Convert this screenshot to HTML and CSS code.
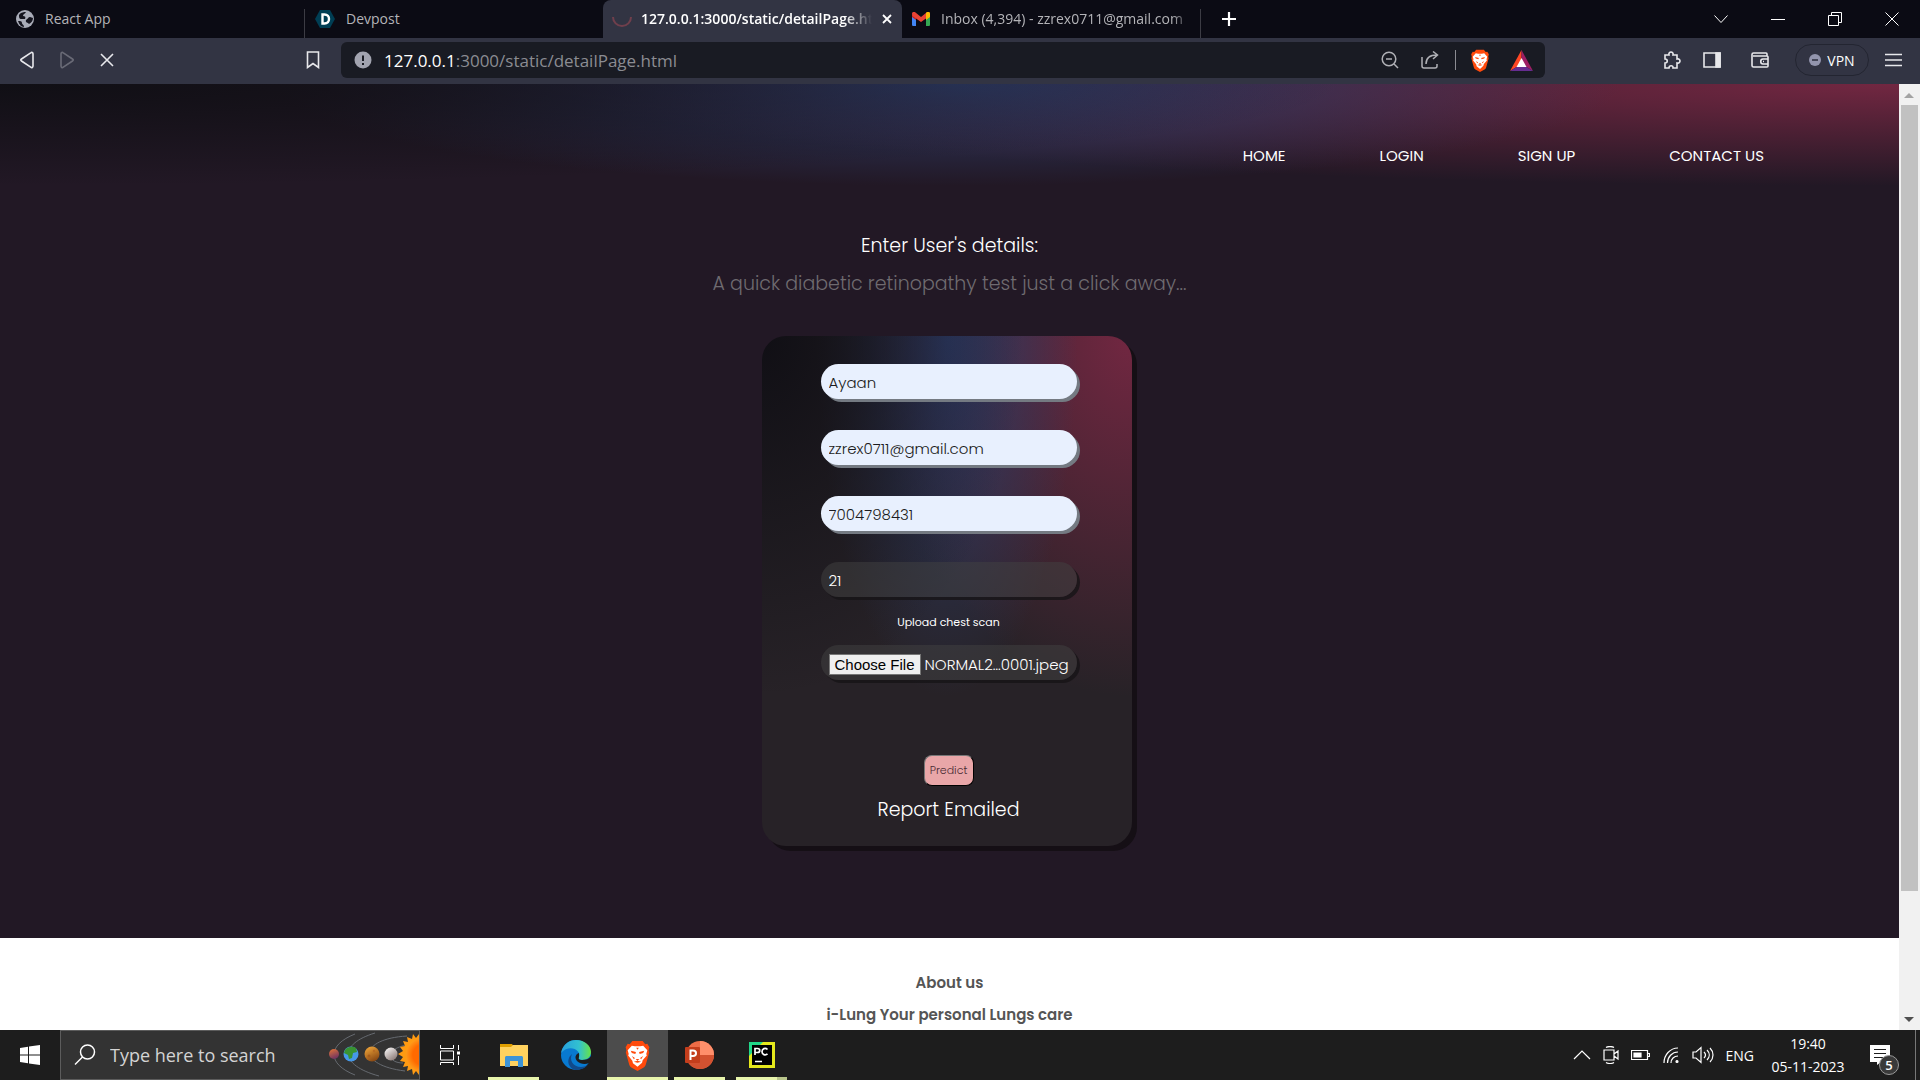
FILE: index.html
```html
<!DOCTYPE html>
<html lang="en">
<head>
    <meta charset="UTF-8">
    <meta name="viewport" content="width=device-width, initial-scale=1.0">
    <title>i-Lung</title>
    <link rel="stylesheet" href="styles.css">
</head>
<body>
    <!-- shared icons -->
    <svg class="defs" aria-hidden="true">
        <symbol id="brave" viewBox="0 0 24 30">
            <path d="M7 1h10l2.500 3 2-.3L23.500 7l-.8 3 .6 2-3.300 12c-.4 1.200-1 2-2 2.700L12 30l-6-3.300c-1-.7-1.600-1.500-2-2.700L.7 12l.6-2-.8-3 2-3.300 2 .3z" fill="#ff4a0c"/>
            <path d="M6.500 5.500l3 .6h5l3-.6 4 4.500-1 3.500.5 1.500-4 4.500-.6 2.500L12 26l-4.400-3.500-.6-2.500L3 15l.5-1.500-1-3.500z" fill="#fff"/>
            <path d="M5.500 10.500l5 1.200-.6 1.800-3.400-1zM18.500 10.500l-5 1.200.6 1.800 3.400-1zM6.500 15.500l3 2-1 1.200zM17.500 15.500l-3 2 1 1.200zM10.300 18.500h3.400L12 20.300zM8.500 21l3.500-1 3.500 1-3.500 1zM10.700 7.500h2.600L12 9.500z" fill="#ff4a0c"/>
        </symbol>
    </svg>

    <header class="tabs">
        <div class="tab">
            <svg width="18" height="18" viewBox="0 0 18 18"><circle cx="9" cy="9" r="9" fill="#a9acb8"/><path d="M3 5c2-3 5-3 7-3-1 2-3 2-3 4 2 0 3 1 2 3H5c-2 0-2-2-2-4zM10 10c2-1 2-3 4-3l3 1c0 3-2 5-4 6-1-2-4-1-3-4zM2 11c2 0 4 0 4 2s2 1 2 4c-3 0-5-3-6-6z" fill="#14141e"/></svg>
            <span class="tab-name">React App</span>
        </div>
        <div class="tab tab-line">
            <svg width="20" height="18" viewBox="0 0 20 18"><path d="M5 0h10l5 9-5 9H5L0 9z" fill="#003e54"/><path d="M7.500 4.500h2c6 0 6 9 0 9h-2z" fill="none" stroke="#fff" stroke-width="2.400"/></svg>
            <span class="tab-name">Devpost</span>
        </div>
        <div class="tab tab-active">
            <svg width="22" height="20" viewBox="0 0 22 20"><path d="M2 8a9 9 0 0 0 18 0" fill="none" stroke="#703f4c" stroke-width="2"/></svg>
            <span class="tab-name">127.0.0.1:3000/static/detailPage.html</span>
            <button class="tab-close" aria-label="Close tab"><svg width="10" height="10" viewBox="0 0 10 10"><path d="M1 1l8 8M9 1L1 9" stroke="#fff" stroke-width="1.800"/></svg></button>
        </div>
        <div class="tab tab-mail">
            <svg width="18" height="14" viewBox="0 0 18 14"><path d="M0 3v9.500c0 1 .5 1.500 1.500 1.500H4V6z" fill="#4285f4"/><path d="M18 3v9.500c0 1-.5 1.500-1.500 1.500H14V6z" fill="#34a853"/><path d="M0 2l4 3.500V8L0 5z" fill="#c5221f"/><path d="M18 2l-4 3.500V8l4-3z" fill="#fbbc04"/><path d="M0 2C0 0 2-1 3.500.5L9 5l5.500-4.500C16-1 18 0 18 2l-.5 2L9 10 .5 4z" fill="#ea4335"/><path d="M14 1l.5-.5C16-1 18 0 18 2v2l-4 3z" fill="#fbbc04"/></svg>
            <span class="tab-name">Inbox (4,394) - zzrex0711@gmail.com</span>
        </div>
        <button class="new-tab" aria-label="New tab"><svg width="16" height="16" viewBox="0 0 16 16"><path d="M8 1v14M1 8h14" stroke="#fff" stroke-width="2.200"/></svg></button>
        <div class="window-buttons">
            <button aria-label="Search tabs"><svg width="14" height="14" viewBox="0 0 14 14"><path d="M.5 3.500L7 10.500l6.500-7"/></svg></button>
            <button aria-label="Minimize"><svg width="14" height="14" viewBox="0 0 14 14"><path d="M0 7.500h14"/></svg></button>
            <button aria-label="Restore"><svg width="14" height="14" viewBox="0 0 14 14"><path d="M.5 3.500h10v10H.500zM3.500 3V.5h10v10H11"/></svg></button>
            <button aria-label="Close"><svg width="14" height="14" viewBox="0 0 14 14"><path d="M.5.5l13 13M13.500.5l-13 13"/></svg></button>
        </div>
    </header>

    <div class="toolbar">
        <div class="nav-buttons">
            <button aria-label="Back"><svg width="16" height="18" viewBox="0 0 16 18"><path d="M14 3v12c0 1.500-1.200 2-2.300 1.200L2.500 10c-1-.7-1-1.300 0-2l9.200-6.200C12.800 1 14 1.500 14 3z"/></svg></button>
            <button class="dim" aria-label="Forward"><svg width="16" height="18" viewBox="0 0 16 18"><path d="M2 3v12c0 1.500 1.200 2 2.300 1.200L13.500 10c1-.7 1-1.300 0-2L4.300 1.800C3.200 1 2 1.500 2 3z"/></svg></button>
            <button aria-label="Stop"><svg width="14" height="14" viewBox="0 0 14 14"><path d="M1 1l12 12M13 1L1 13"/></svg></button>
        </div>
        <button class="bookmark" aria-label="Bookmark"><svg width="14" height="18" viewBox="0 0 14 18"><path d="M1.500 1h11v15.500L7 12.500l-5.500 4z"/></svg></button>
        <div class="address">
            <svg width="18" height="18" viewBox="0 0 18 18"><circle cx="9" cy="9" r="8.500" fill="#a2a4b0"/><path d="M9 4.500V10M9 12v2" stroke="#191b23" stroke-width="2"/></svg>
            <p class="url"><b>127.0.0.1</b>:3000/static/detailPage.html</p>
            <svg class="line" width="18" height="18" viewBox="0 0 18 18"><circle cx="8" cy="8" r="6.800"/><path d="M5 8h6M13 13l4 4"/></svg>
            <svg class="line share" width="18" height="18" viewBox="0 0 18 18"><path d="M1 6v9c0 1.500.5 2 2 2h11c1.500 0 2-.5 2-2v-2M5 13c0-6 4-9 11-9M12 .500L16.500 4 12 8"/></svg>
            <i class="divider"></i>
            <svg width="20" height="23"><use href="#brave"/></svg>
            <svg class="bat" width="23" height="21" viewBox="0 0 23 21"><path d="M11.500 0L0 21l11.500-7z" fill="#ff4724"/><path d="M11.500 0L23 21l-11.500-7z" fill="#9e1f63"/><path d="M0 21h23l-11.500-7z" fill="#662d91"/><path d="M11.500 8l-5 9h10z" fill="#fff"/></svg>
        </div>
        <div class="extensions">
            <button aria-label="Extensions"><svg width="18" height="18" viewBox="0 0 18 18"><path d="M2 4h4c-1-4 5-4 4 0h4v4c4-1 4 5 0 4v5h-4c.5-3-4-3-4 0H2v-5c3 0 3-4 0-4z"/></svg></button>
            <button aria-label="Side panel"><svg width="18" height="16" viewBox="0 0 18 16"><path d="M1 1h16v14H1z"/><path d="M13 1h4v14h-4z" fill="#e8e8ec"/></svg></button>
            <button class="wallet" aria-label="Wallet"><svg width="18" height="16" viewBox="0 0 18 16"><path d="M16 4V2c0-.6-.4-1-1-1H2.500C1.500 1 1 1.500 1 2.500v11c0 1 .5 1.500 1.500 1.500H16c.6 0 1-.4 1-1V5c0-.6-.4-1-1-1H2M17 7h-5c-3 0-3 5 0 5h5M12 9.500h1"/></svg></button>
            <button class="vpn"><svg width="12" height="14" viewBox="0 0 12 14"><circle cx="6" cy="7" r="6" fill="#9395ad" stroke="none"/><path d="M3 7h6" stroke="#323443"/></svg>VPN</button>
            <button aria-label="Menu"><svg width="17" height="14" viewBox="0 0 17 14"><path d="M0 1.500h17M0 7h17M0 12.500h17"/></svg></button>
        </div>
    </div>

    <div class="viewport">
        <div class="page">
            <div class="dark">
                <nav class="menu">
                    <a href="#">HOME</a>
                    <a href="#">LOGIN</a>
                    <a href="#">SIGN UP</a>
                    <a href="#">CONTACT US</a>
                </nav>
                <main class="container">
                    <h1>Enter User's details:</h1>
                    <p class="tagline">A quick diabetic retinopathy test just a click away...</p>
                    <form class="card">
                        <input class="field filled" type="text" aria-label="Name" value="Ayaan">
                        <input class="field filled" type="email" aria-label="Email" value="zzrex0711@gmail.com">
                        <input class="field filled" type="tel" aria-label="Phone" value="7004798431">
                        <input class="field" type="text" aria-label="Age" value="21">
                        <label for="scan">Upload chest scan</label>
                        <input class="field file" type="file" id="scan">
                        <button class="predict" type="button">Predict</button>
                        <p class="result">Report Emailed</p>
                    </form>
                </main>
            </div>
            <footer class="about">
                <h2>About us</h2>
                <h2>i-Lung Your personal Lungs care</h2>
            </footer>
        </div>
        <div class="scrollbar">
            <svg width="21" height="21" viewBox="0 0 21 21"><path d="M5 14l5-5 5 5z" fill="#a3a3a3"/></svg>
            <div class="track"><div class="thumb"></div></div>
            <svg width="21" height="21" viewBox="0 0 21 21"><path d="M5 8l5 5 5-5z" fill="#505050"/></svg>
        </div>
    </div>

    <div class="taskbar">
        <button class="start" aria-label="Start"><svg width="20" height="20" viewBox="0 0 20 20"><path d="M0 3l8-1.200V9.500H0zM9 1.600L20 0v9.500H9zM0 10.500h8v7.700L0 17zM9 10.500h11V20L9 18.400z" fill="#fff"/></svg></button>
        <div class="search">
            <svg width="22" height="22" viewBox="0 0 22 22"><circle cx="13.500" cy="8" r="7" fill="none" stroke="#fff" stroke-width="1.500"/><path d="M8.500 13L1 20.500" stroke="#fff" stroke-width="1.500"/></svg>
            <input type="text" aria-label="Search" placeholder="Type here to search">
            <svg class="planets" width="90" height="48" viewBox="0 0 90 48">
                <defs>
                    <radialGradient id="sun"><stop offset="0.600" stop-color="#ff6a00"/><stop offset="1" stop-color="#ff9a1a"/></radialGradient>
                    <linearGradient id="mars" x2="0.400" y2="1"><stop stop-color="#e57536"/><stop offset="1" stop-color="#743560"/></linearGradient>
                    <linearGradient id="venus" x2="0.500" y2="1"><stop stop-color="#f8ad3c"/><stop offset="1" stop-color="#8c4b14"/></linearGradient>
                    <linearGradient id="mercury" x2="0.700" y2="1"><stop stop-color="#fff"/><stop offset="1" stop-color="#8d7c78"/></linearGradient>
                </defs>
                <g fill="none" stroke="#666a70"><path d="M26 3C-2 14-2 33 26 44M46 2C10 13 10 34 50 45M78 5C30 8 28 34 76 40M88 13C55 14 56 32 74 32"/></g>
                <circle cx="5" cy="23" r="5" fill="url(#mars)"/>
                <circle cx="22" cy="23" r="7.500" fill="#4698e8"/><path d="M16 19c3-4 8-4 11-2l1 4-4 1-1 5-3 1-1-4-4-2z" fill="#399332"/>
                <circle cx="43" cy="23" r="7.500" fill="url(#venus)"/><circle cx="40" cy="25" r="1.500" fill="#a65c1a"/><circle cx="45" cy="20" r="1.200" fill="#b86b22"/>
                <circle cx="62" cy="23" r="6.500" fill="url(#mercury)"/>
                <path d="M90 3l-3 4-3-4-1 5-5-2 1 5-5-1 2 5-5 1 3 4-5 3 5 3-3 4 5 1-2 5 5-1-1 5 5-2 1 6 3-4 3 4z" fill="#ff9b12"/>
                <circle cx="94" cy="24" r="17" fill="url(#sun)"/>
            </svg>
        </div>
        <div class="apps">
            <button class="view" aria-label="Task view"><svg width="20" height="20" viewBox="0 0 20 20"><path d="M.5 0v3.500h13V0M.5 6h13v9H.500zM.5 20v-2.500h13V20M18.500 0v5M18.500 11v9" fill="none" stroke="#fff"/><path d="M17 6.500h3v3h-3z" fill="#fff"/></svg></button>
            <button class="open" aria-label="File Explorer"><svg width="28" height="24" viewBox="0 0 28 24"><path d="M0 1h12l2 3v5H0z" fill="#e09f00"/><path d="M0 4h11l2-2h15v21H0z" fill="#ffd25e"/><path d="M5 24V15c0-1.500.5-2 2-2h14c1.500 0 2 .5 2 2v9h-5v-6h-8v6z" fill="#3d94d6"/></svg></button>
            <button aria-label="Edge"><svg width="30" height="30" viewBox="0 0 30 30">
                <defs><linearGradient id="edgeTop"><stop stop-color="#279fdd"/><stop offset="0.600" stop-color="#32c1d0"/><stop offset="1" stop-color="#67e346"/></linearGradient></defs>
                <circle cx="15" cy="15" r="15" fill="#0879d0"/>
                <path d="M0 13C2 4 8 0 15 0c9 0 15 6 15 12 0 5-4 8-9 8-3 0-4-1-3-3 3-6-9-14-18-4z" fill="url(#edgeTop)"/>
                <path d="M11 14c-3 6 1 13 9 13 3 0 6-1 8-4-3 5-8 7-13 7C8 29 4 20 11 14z" fill="#114a8b"/>
                <path d="M18 17c-1 2 0 3 3 3 4 0 7-1 9-4v5l-2 2c-4 2-9 1-12-2-3-4-1-7 2-8z" fill="#1d1d1d"/></svg></button>
            <button class="open current" aria-label="Brave"><svg width="25" height="31"><use href="#brave"/></svg></button>
            <button class="open" aria-label="PowerPoint"><svg width="29" height="28" viewBox="0 0 29 28"><circle cx="15" cy="14" r="14" fill="#ed6c47"/><path d="M15 0a14 14 0 0 1 14 14H15z" fill="#ff8f6b"/><path d="M1 14h28a14 14 0 0 1-28 0z" fill="#d35230"/><rect y="6" width="15" height="16" rx="1" fill="#c43e1c"/><path d="M5.500 19V9.500h2.500c4 0 4 5.500 0 5.500H5.500" fill="none" stroke="#fff" stroke-width="2"/></svg></button>
            <button class="open several" aria-label="PyCharm"><svg width="26" height="26" viewBox="0 0 26 26"><path d="M0 0h26v26H0z" fill="#e5e81c"/><path d="M0 0h14L0 14z" fill="#21d789"/><path d="M3 3h20v20H3z" fill="#000"/><path d="M6 13V6.500h2.500c3 0 3 4 0 4H6M18.500 7.500c-2-2-5.500-1-5.500 2.200 0 3 3.500 4 5.500 2.200M6 19.500h7" fill="none" stroke="#fff" stroke-width="1.700"/></svg></button>
        </div>
        <div class="tray">
            <svg width="18" height="18" viewBox="0 0 18 18"><path d="M1 13l8-8 8 8"/></svg>
            <svg width="16" height="18" viewBox="0 0 16 18"><path d="M1 4h10v10H1zM11 8l4-3v8l-4-3M3 1.500c2-1.300 6-1.300 8 0M3 16.500c2 1.300 6 1.300 8 0"/></svg>
            <svg width="19" height="18" viewBox="0 0 19 18"><path d="M.5 4.500h16v9H.500zM17 7.500h1.500v3H17"/><path d="M3 7h7v4H3z" fill="#fff"/></svg>
            <svg width="18" height="18" viewBox="0 0 18 18"><path d="M2 17C2 9 8 2 16 2M5.500 17C5.500 11 10 6 16 6M9 17c0-4 3-7 7-7" /><circle cx="15" cy="15.500" r="1" fill="#fff"/></svg>
            <svg width="22" height="18" viewBox="0 0 22 18"><path d="M1 6h3l5-4.500v15L4 12H1zM12 6c2 2 2 4 0 6M15 4c3 3 3 7 0 10M18 2c4 4 4 10 0 14"/></svg>
            <span>ENG</span>
            <div class="clock"><span>19:40</span><span>05-11-2023</span></div>
            <button class="notes" aria-label="Notifications">
                <svg width="20" height="20" viewBox="0 0 20 20"><path d="M0 0h20v17h-9l-4 3v-3H0z" fill="#fff"/><path d="M4 4.500h12M4 8.500h12M4 12.500h12" stroke="#1d1d1d"/></svg>
                <span class="badge">5</span>
            </button>
        </div>
    </div>
    <script src="script.js"></script>
</body>
</html>
```
FILE: styles.css
```css
* {
    box-sizing: border-box;
}
body {
    margin: 0;
    height: 100vh;
    display: flex;
    flex-direction: column;
    overflow: hidden;
    font-family: "Open Sans", "Noto Sans", sans-serif;
    color: #fff;
}
button {
    display: flex;
    align-items: center;
    justify-content: center;
    padding: 0;
    border: none;
    background: none;
    color: inherit;
    font: inherit;
}
svg {
    flex: none;
}
.defs {
    display: none;
}

/* browser tabs */
.tabs {
    display: flex;
    flex: none;
    height: 38px;
    background: #0b0b14;
}
.tab {
    display: flex;
    align-items: center;
    flex: 0 1 299px;
    gap: 11px;
    min-width: 0;
    padding: 0 10px 1px;
    font-size: 14px;
    color: #b4b4b8;
}
.tab:first-child {
    flex-basis: 304px;
    padding-left: 16px;
}
.tab-line {
    border-left: 1px solid #33333b;
    border-image: linear-gradient(transparent 24%, #3c3c44 24%) 1;
}
.tab-name {
    flex: 1;
    overflow: hidden;
    white-space: nowrap;
}
.tab-active {
    padding: 0 8px 1px;
    gap: 8px;
    border-radius: 8px 8px 0 0;
    background: #323443;
    color: #fff;
    font-weight: 600;
}
.tab-active .tab-name {
    -webkit-mask-image: linear-gradient(to right, #000 88%, transparent);
}
.tab-close {
    width: 14px;
}
.tab-mail {
    padding: 0 8px 1px 10px;
    border-right: 1px solid #3c3c44;
    border-image: linear-gradient(transparent 24%, #3c3c44 24%) 1;
}
.tab-mail .tab-name {
    -webkit-mask-image: linear-gradient(to right, #000 92%, transparent);
}
.new-tab {
    width: 56px;
}
.window-buttons {
    display: flex;
    margin-left: auto;
}
.window-buttons button {
    width: 57px;
}
.window-buttons svg {
    fill: none;
    stroke: #fff;
}

/* toolbar */
.toolbar {
    display: flex;
    flex: none;
    align-items: center;
    height: 46px;
    padding: 0 18px 2px 0;
    background: #323443;
}
.nav-buttons {
    display: flex;
    padding-left: 7px;
}
.nav-buttons button {
    width: 40px;
}
.nav-buttons svg,
.bookmark svg,
.extensions svg {
    fill: none;
    stroke: #e8e8ec;
    stroke-width: 1.6;
}
.dim {
    opacity: 0.3;
}
.bookmark {
    width: 40px;
    margin-left: 166px;
}
.address {
    display: flex;
    align-items: center;
    flex: 1;
    height: 36px;
    margin: 0 118px 0 8px;
    padding: 0 12px 0 13px;
    border-radius: 6px;
    background: #191b23;
}
.url {
    flex: 1;
    margin: 0 0 0 12px;
    font-size: 17px;
    color: #8b8c92;
}
.url b {
    font-weight: 400;
    color: #fff;
}
.line {
    fill: none;
    stroke: #b0b1b6;
    stroke-width: 1.5;
}
.share {
    margin-left: 22px;
}
.divider {
    width: 1px;
    height: 20px;
    margin: 0 14px 0 16px;
    background: #8b8c92;
}
.bat {
    margin-left: 20px;
}
.extensions {
    display: flex;
    align-items: center;
    gap: 22px;
}
.wallet {
    margin-left: 8px;
}
.extensions .vpn {
    gap: 6px;
    width: 74px;
    height: 32px;
    margin: 0 -6px 0 4px;
    border: 1px solid #232531;
    border-radius: 16px;
    font-size: 14px;
}

/* page */
.viewport {
    display: flex;
    flex: 1;
    min-height: 0;
}
.page {
    flex: 1;
    overflow: hidden;
    background: #fff;
    font-family: Poppins, Inter, sans-serif;
}
.dark {
    padding-bottom: 92px;
    background: #221825;
}
.menu,
.card {
    background-image:
        radial-gradient(at 0% 0%, hsla(253, 16%, 7%, 1) 0, transparent 50%),
        radial-gradient(at 50% 0%, hsla(225, 39%, 30%, 1) 0, transparent 50%),
        radial-gradient(at 100% 0%, hsla(339, 49%, 30%, 1) 0, transparent 50%);
}
.menu {
    display: flex;
    align-items: center;
    justify-content: flex-end;
    gap: 94px;
    height: 144px;
    padding: 0 135px 2px 0;
}
.menu a {
    color: #fff;
    font-size: 15px;
    font-weight: 400;
    text-decoration: none;
}
.container {
    display: flex;
    flex-direction: column;
    align-items: center;
}
h1,
.tagline,
.result {
    margin: 0;
    font-size: 19px;
    line-height: 30px;
    font-weight: 300;
}
h1 {
    margin-top: 3px;
}
.tagline {
    margin-top: 8px;
    color: #6f6b70;
}
.card {
    display: flex;
    flex-direction: column;
    align-items: center;
    width: 370px;
    height: 510px;
    margin: 37px 5px 0 0;
    padding: 28px 0 0 3px;
    border-radius: 24px;
    background-color: #272227;
    box-shadow: 5px 5px 0 #150f15;
}
.field {
    width: 256px;
    height: 35px;
    margin-bottom: 31px;
    padding: 2px 8px 0;
    border: none;
    border-radius: 20px;
    background: rgba(66, 66, 66, 0.5);
    box-shadow: 3px 3px 0 rgba(22, 20, 22, 0.8);
    color: #fff;
    font-family: inherit;
    font-size: 15px;
    font-weight: 300;
}
.filled {
    background: #e8f0fe;
    box-shadow: 3px 3px 0 #747a82;
    color: #1b1b20;
}
.card label {
    margin-top: -15px;
    font-size: 11px;
    line-height: 18px;
}
.file {
    margin: 14px 0 75px;
    padding: 8px 4px 0 8px;
}
.file::file-selector-button {
    height: 21px;
    margin-right: 4px;
    padding: 0 5px;
    border: 1px solid #767676;
    background: #efefef;
    color: #000;
    font: 15px "Liberation Sans", Arial, sans-serif;
}
.predict {
    width: 50px;
    height: 31px;
    border: 1px solid #000;
    border-color: #777 #000 #000 #777;
    border-radius: 8px;
    background: #e9a6a8;
    color: #4a2a33;
    font-size: 11px;
    font-weight: 300;
}
.result {
    margin-top: 9px;
}
.about {
    padding-top: 29px;
    text-align: center;
}
.about h2 {
    margin: 0;
    font-size: 15px;
    line-height: 32px;
    font-weight: 600;
    color: #555;
}

/* scrollbar */
.scrollbar {
    display: flex;
    flex-direction: column;
    width: 21px;
    background: #f1f1f1;
}
.track {
    flex: 1;
    padding: 0 2px;
}
.thumb {
    height: 87%;
    background: #c1c1c1;
}

/* taskbar */
.taskbar {
    display: flex;
    flex: none;
    height: 50px;
    background: #1d1d1d;
}
.start {
    width: 60px;
}
.search {
    display: flex;
    align-items: center;
    width: 360px;
    padding-left: 13px;
    border: 1px solid #5c5c5c;
    background: #333;
}
.search input {
    flex: 1;
    min-width: 0;
    padding: 0 0 0 14px;
    border: none;
    background: none;
    font: 18px "Open Sans", sans-serif;
}
.search input::placeholder {
    color: #d4d4d4;
}
.apps {
    display: flex;
    padding-left: 1px;
}
.apps button {
    width: 61px;
    margin-right: 1px;
}
.apps .view {
    width: 57px;
    margin-right: 5px;
}
.apps .open {
    background: linear-gradient(#e8f5ac, #e8f5ac) bottom / 51px 3px no-repeat;
}
.apps .current {
    background-color: #4c4c4c;
    background-size: 100% 3px;
}
.apps .several {
    background-image: linear-gradient(to right, #e8f5ac 80%, #b9c58b 80%);
}
.tray {
    display: flex;
    align-items: center;
    gap: 12px;
    margin-left: auto;
    margin-right: 4px;
    padding-right: 25px;
    border-right: 1px solid #777;
    font-size: 14px;
}
.tray > svg {
    fill: none;
    stroke: #fff;
    stroke-width: 1.2;
}
.clock {
    display: flex;
    flex-direction: column;
    align-items: center;
    width: 84px;
    line-height: 23px;
}
.notes {
    position: relative;
    margin-left: 8px;
}
.badge {
    position: absolute;
    left: 9px;
    top: 10px;
    width: 20px;
    height: 20px;
    border: 1px solid #999;
    border-radius: 50%;
    background: #3a3a3a;
    font-size: 13px;
    line-height: 18px;
    font-weight: 600;
}
```
FILE: script.js
```js
const scan = document.getElementById('scan');
const picked = new DataTransfer();
picked.items.add(new File([''], 'NORMAL2…0001.jpeg', { type: 'image/jpeg' }));
scan.files = picked.files;
```
